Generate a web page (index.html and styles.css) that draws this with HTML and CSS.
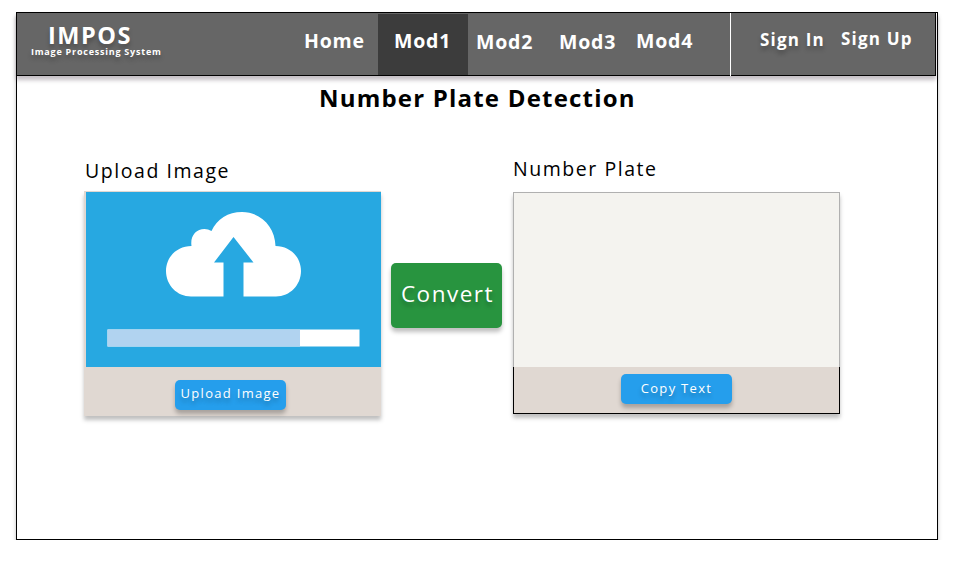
FILE: index.html
```html
<!DOCTYPE html>
<html lang="en">
<head>
<meta charset="utf-8">
<title>IMPOS - Number Plate Detection</title>
<link rel="stylesheet" href="styles.css">
</head>
<body>
<div class="frame">
  <header class="bar">
    <div class="brand">
      <div class="brand-name">IMPOS</div>
      <div class="brand-sub">Image Processing System</div>
    </div>
    <nav class="nav">
      <a class="link home">Home</a>
      <a class="link active">Mod1</a>
      <a class="link mod2">Mod2</a>
      <a class="link mod3">Mod3</a>
      <a class="link mod4">Mod4</a>
    </nav>
    <div class="account">
      <a class="sign-in">Sign In</a>
      <a class="sign-up">Sign Up</a>
    </div>
  </header>
  <main>
    <h1>Number Plate Detection</h1>
    <div class="work">
      <section class="source">
        <h2 class="source-title">Upload Image</h2>
        <div class="source-card">
          <svg class="picture" width="295" height="175" viewBox="0 0 295 175">
            <rect width="295" height="175" fill="#27a8e1"/>
            <path fill="#fff" d="M105 104.500C91 104.500 80 93 80 79C80 65 91 54 105.500 54C104 44 110 37 118.500 37Q122 37 125.500 39C131 27 142 20 156 20C175 20 189 35 189.500 54C204 54 215 65 215 79C215 93 204 104.500 190 104.500H157.500V70.500H167.500L147.500 45L128 70.500H137.500V104.500Z"/>
            <rect x="21.500" y="137.500" width="252" height="17" fill="#fff"/>
            <rect x="21.500" y="137.500" width="192.500" height="17" fill="#b1d3f0"/>
          </svg>
          <div class="source-foot"><button class="small upload">Upload Image</button></div>
        </div>
      </section>
      <button class="convert">Convert</button>
      <section class="result">
        <h2 class="result-title">Number Plate</h2>
        <div class="result-card">
          <div class="result-view"></div>
          <div class="result-foot"><button class="small copy">Copy Text</button></div>
        </div>
      </section>
    </div>
  </main>
</div>
</body>
</html>
```
FILE: styles.css
```css
* { box-sizing: border-box; }
body {
  margin: 0;
  padding: 12px 15px 0 16px;
  background: #fff;
  font-family: "Open Sans", "Noto Sans", sans-serif;
  color: #000;
}
.frame {
  width: 922px;
  height: 528px;
  border: 1px solid #000;
  box-shadow: 0 4px 4px rgba(0, 0, 0, .25);
}
.bar {
  display: flex;
  width: 920px;
  height: 64px;
  margin: -1px 0 0 -1px;
  border: 1px solid #000;
  background: #666;
  box-shadow: 0 4px 4px rgba(55, 40, 55, .3);
  color: #fff;
  font-weight: 700;
  white-space: nowrap;
}
.brand { width: 270px; padding: 10px 0 0 14px; text-shadow: 0 4px 4px rgba(0, 0, 0, .25); }
.brand-name { padding-left: 17px; font-size: 23.500px; line-height: 24px; letter-spacing: 1.500px; }
.brand-sub { font-size: 9px; line-height: 10px; letter-spacing: .77px; }
.nav { display: flex; width: 443px; font-size: 19.500px; line-height: 20px; letter-spacing: .8px; }
.link { padding-top: 18px; }
.home { width: 91px; padding-left: 17px; }
.active { width: 90px; height: 61px; margin-top: 1px; padding: 17px 0 0 16px; background: #3c3c3c; }
.mod2 { width: 84px; padding: 19px 0 0 8px; }
.mod3 { width: 77px; padding: 19px 0 0 7px; }
.mod4 { padding-left: 7px; }
.account { display: flex; height: 63px; border-left: 1px solid #fff; font-size: 17px; line-height: 20px; letter-spacing: 1.200px; }
.sign-in { width: 81px; margin-left: 29px; padding-top: 17px; text-shadow: 0 4px 4px rgba(0, 0, 0, .25); }
.sign-up { padding-top: 16px; }
h1, h2 { margin: 0; white-space: nowrap; }
h1 { padding: 6px 0 0 302px; font-size: 24px; line-height: 32px; letter-spacing: 1.200px; }
h2 { font-size: 19.500px; line-height: 26px; font-weight: 400; letter-spacing: 1.550px; }
.work { display: flex; align-items: flex-start; padding: 42px 0 0 67px; }
.source { width: 297px; }
.source-title { height: 35px; padding: 2px 0 0 1px; }
.source-card {
  width: 297px;
  height: 225px;
  padding: 1px 0 0 2px;
  background: #e0d8d2;
  box-shadow: 0 4px 4px rgba(0, 0, 0, .25);
}
.picture { display: block; }
.source-foot { display: flex; padding: 13px 0 0 89px; }
button {
  padding: 0;
  border: 0;
  color: #fff;
  font-family: inherit;
  white-space: nowrap;
  box-shadow: 0 4px 4px rgba(0, 0, 0, .25);
  text-shadow: 0 4px 4px rgba(0, 0, 0, .25);
}
.small {
  width: 111px;
  height: 30px;
  border-radius: 5px;
  background: #259eec;
  font-size: 13px;
  line-height: 18px;
  letter-spacing: 1.300px;
}
.upload { padding-bottom: 5px; }
.copy { padding-bottom: 2px; }
.convert {
  width: 111px;
  height: 65px;
  margin: 107px 11px 0 10px;
  border-radius: 5px;
  background: #28943f;
  font-size: 22.500px;
  letter-spacing: 1.500px;
  padding: 0 0 4px 2px;
}
.result { width: 327px; }
.result-title { height: 36px; }
.result-card { height: 222px; box-shadow: 0 4px 4px rgba(0, 0, 0, .25); }
.result-view { height: 175px; border: 1px solid #b0b0b0; border-bottom: 0; background: #f4f3ef; }
.result-foot { display: flex; height: 47px; padding: 7px 0 0 107px; border: 1px solid #000; border-top: 0; background: #e0d8d2; }
```
